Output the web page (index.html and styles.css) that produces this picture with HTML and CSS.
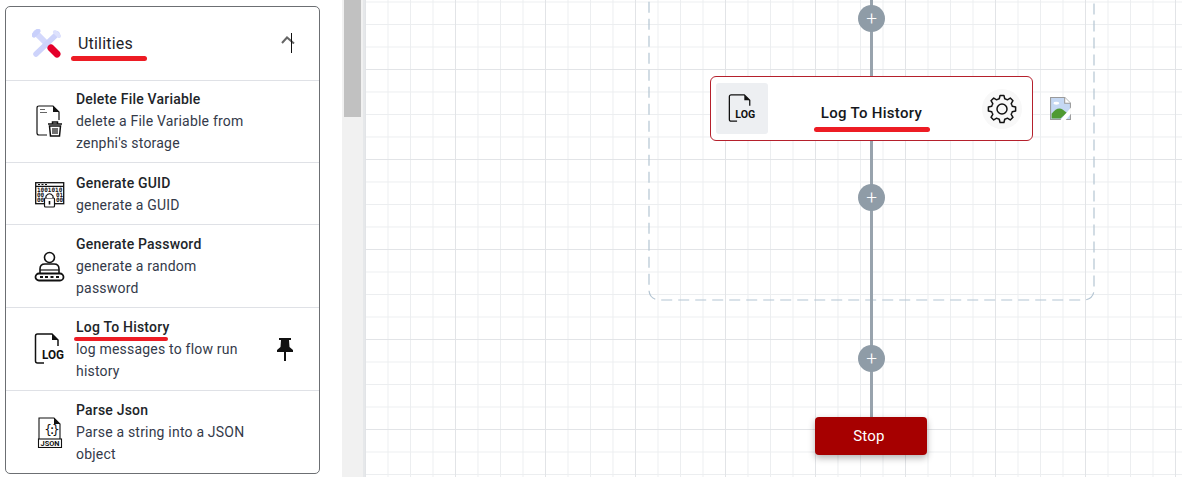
FILE: index.html
```html
<!DOCTYPE html>
<html lang="en">
  <head>
    <meta charset="UTF-8" />
    <title>Flow Designer</title>
    <link rel="stylesheet" href="styles.css">
  </head>
  <body>
    <div class="page">
      <aside class="sidebar">
        <div class="panel">
          <div class="panel-header">
            <svg class="utilities-icon" viewBox="0 0 29 29">
              <path d="M4 4 L19 19" stroke="#d3d8fc" stroke-width="6" stroke-linecap="round"/>
              <path d="M2 6 L6 2" stroke="#c9d0fb" stroke-width="5" stroke-linecap="round"/>
              <path d="M25 5 L4 25" stroke="#cdd3fb" stroke-width="5.500" stroke-linecap="round"/>
              <path d="M23 3 L27 7" stroke="#dde1fd" stroke-width="4" stroke-linecap="round"/>
              <path d="M19 19 L25 25" stroke="#e4002b" stroke-width="7" stroke-linecap="round"/>
            </svg>
            <span class="panel-title">Utilities</span>
            <svg class="chevron" viewBox="0 0 14 8">
              <path d="M1 7 L6 1.500 L13 7.500" fill="none" stroke="#666" stroke-width="2"/>
            </svg>
            <span class="text-cursor"></span>
            <span class="mark mark-utilities"></span>
          </div>

          <div class="row row-first">
            <svg class="row-icon" viewBox="0 0 32 32">
              <path d="M13 30 H5 Q3 30 3 28 V3 Q3 1 5 1 H19 L25 7 V15" fill="none" stroke="#111" stroke-width="1.200"/>
              <path d="M19 1 V7 H25 Z" fill="#111"/>
              <path d="M6 4.500 H11 M6 7.500 H13" stroke="#666" stroke-width="1"/>
              <path d="M14 19 H28 M18.500 19 V17 H23.500 V19" fill="none" stroke="#111" stroke-width="1.500"/>
              <path d="M15.500 21 H26.500 L25.500 31 H16.500 Z" fill="none" stroke="#111" stroke-width="1.500"/>
              <path d="M19 23 V29 M21 23 V29 M23 23 V29" stroke="#111" stroke-width="1.200"/>
            </svg>
            <div class="row-text">
              <div class="row-title">Delete File Variable</div>
              <div class="row-desc">delete a File Variable from zenphi's storage</div>
            </div>
          </div>

          <div class="row row-short">
            <svg class="row-icon" viewBox="0 0 32 32">
              <rect x="1.700" y="4.700" width="28" height="21" fill="none" stroke="#111" stroke-width="1.300"/>
              <path d="M2 8.300 H30" stroke="#111" stroke-width="1.200"/>
              <path d="M4 6.500 H6 M7.500 6.500 H9.500 M11 6.500 H13" stroke="#111" stroke-width="1"/>
              <text class="tiny-code" x="3" y="14">1001010</text>
              <text class="tiny-code" x="3" y="19">00</text>
              <text class="tiny-code" x="22" y="19">01</text>
              <text class="tiny-code" x="3" y="24">00</text>
              <text class="tiny-code" x="22" y="24">00</text>
              <rect x="10.500" y="20" width="10" height="9" rx="1" fill="#fff" stroke="#111" stroke-width="1.200"/>
              <path d="M12 20 V18 Q15.500 13.500 19 18 V20" fill="#fff" stroke="#111" stroke-width="1.200"/>
              <path d="M15.500 23 V26.500" stroke="#111" stroke-width="1.600"/>
            </svg>
            <div class="row-text">
              <div class="row-title">Generate GUID</div>
              <div class="row-desc">generate a GUID</div>
            </div>
          </div>

          <div class="row row-tall">
            <svg class="row-icon" viewBox="0 0 32 32">
              <circle cx="15.500" cy="7.500" r="5" fill="none" stroke="#111" stroke-width="1.600"/>
              <path d="M6 23 V19 Q6 14 11 14 H20 Q25 14 25 19 V23" fill="none" stroke="#111" stroke-width="1.600"/>
              <path d="M6 20 H25" stroke="#111" stroke-width="1.200"/>
              <rect x="1.500" y="23.500" width="28" height="7" rx="3.500" fill="none" stroke="#111" stroke-width="1.800"/>
              <path d="M6 27 H9 M11 27 H14 M16.500 27 H19.500 M22 27 H25" stroke="#111" stroke-width="1.800"/>
            </svg>
            <div class="row-text">
              <div class="row-title">Generate Password</div>
              <div class="row-desc">generate a random password</div>
            </div>
          </div>

          <div class="row row-tall">
            <svg class="row-icon" viewBox="0 0 32 32">
              <path d="M10 30 H3.500 Q1.500 30 1.500 28 V3 Q1.500 1 3.500 1 H18 L24 7 V13" fill="none" stroke="#111" stroke-width="1.500"/>
              <path d="M18 1 V7 H24 Z" fill="#111"/>
              <text class="log-text" x="8" y="26" textLength="22" lengthAdjust="spacingAndGlyphs">LOG</text>
            </svg>
            <div class="row-text">
              <div class="row-title">Log To History</div>
              <div class="row-desc">log messages to flow run history</div>
            </div>
            <svg class="pin" viewBox="0 0 18 24">
              <path d="M3 1 H15 V3 H13 L13.500 10 L17 13 V15 H1 V13 L4.500 10 L5 3 H3 Z" fill="#111"/>
              <path d="M9 15 V24" stroke="#111" stroke-width="2"/>
            </svg>
            <span class="mark mark-row"></span>
          </div>

          <div class="row row-tall row-last">
            <svg class="row-icon" viewBox="0 -1 32 32">
              <path d="M5 22 V1 H20 L26 7 V22" fill="none" stroke="#111" stroke-width="1.100"/>
              <path d="M20 1 V7 H26 Z" fill="#111"/>
              <text class="brace-text" x="10.500" y="17" textLength="15">{:}</text>
              <rect x="4.500" y="22" width="23" height="8.500" fill="none" stroke="#111" stroke-width="1.100"/>
              <text class="json-text" x="6.500" y="29" textLength="19" lengthAdjust="spacingAndGlyphs">JSON</text>
            </svg>
            <div class="row-text">
              <div class="row-title">Parse Json</div>
              <div class="row-desc">Parse a string into a JSON object</div>
            </div>
          </div>
        </div>
      </aside>

      <div class="scrollbar"><div class="scrollbar-thumb"></div></div>

      <main class="canvas">
        <svg class="group-box" width="448" height="362">
          <rect x="1" y="1" width="445" height="359" rx="10" fill="none" stroke="#b4c5d3" stroke-width="1.200" stroke-dasharray="11 6"/>
        </svg>
        <div class="connector"></div>

        <button class="add-btn add-1">+</button>

        <div class="node">
          <div class="node-icon">
            <svg class="node-log" viewBox="0 0 32 32">
              <path d="M10 30 H3.500 Q1.500 30 1.500 28 V3 Q1.500 1 3.500 1 H18 L24 7 V13" fill="none" stroke="#111" stroke-width="1.400"/>
              <path d="M18 1 V7 H24 Z" fill="#111"/>
              <text class="log-text" x="8" y="26" textLength="22" lengthAdjust="spacingAndGlyphs">LOG</text>
            </svg>
          </div>
          <div class="node-title">Log To History</div>
          <div class="node-gear">
            <svg viewBox="0 0 24 24" width="30" height="30">
              <defs>
                <path id="tooth" d="M8.750 4.150 L9.800 3.790 L10.470 1.110 H13.530 L14.200 3.790 L15.250 4.150" fill="none" stroke="#111" stroke-width="1.200" stroke-linejoin="round"/>
              </defs>
              <use href="#tooth"/>
              <use href="#tooth" transform="rotate(45 12 12)"/>
              <use href="#tooth" transform="rotate(90 12 12)"/>
              <use href="#tooth" transform="rotate(135 12 12)"/>
              <use href="#tooth" transform="rotate(180 12 12)"/>
              <use href="#tooth" transform="rotate(225 12 12)"/>
              <use href="#tooth" transform="rotate(270 12 12)"/>
              <use href="#tooth" transform="rotate(315 12 12)"/>
              <circle cx="12" cy="12" r="4" fill="none" stroke="#111" stroke-width="1.200"/>
            </svg>
          </div>
          <span class="mark mark-node"></span>
        </div>

        <svg class="broken-img" viewBox="0 0 20 22">
          <path d="M0.500 0.500 H14 L19.500 6 V21.500 H0.500 Z" fill="#c5d8f3" stroke="#9a9a9a"/>
          <path d="M14 0.500 V6 H19.500" fill="#fff" stroke="#9a9a9a"/>
          <path d="M1.500 20.500 V16 Q7 9 12 12 L16 15 L10 20.500 Z" fill="#4f9a32"/>
          <path d="M10 22 L20 10 V16 L15 22 Z" fill="#fff"/>
          <ellipse cx="6" cy="6" rx="2.800" ry="1.400" fill="#fff"/>
        </svg>

        <button class="add-btn add-2">+</button>
        <button class="add-btn add-3">+</button>

        <button class="stop-btn">Stop</button>
      </main>
    </div>
  </body>
</html>
```

FILE: styles.css
```css
:root {
  --line-color: #98a3ad;
  --panel-border: #6c6f73;
  --divider: #dfe1e6;
  --mark-red: #ed1c24;
}

* {
  box-sizing: border-box;
}

html,
body {
  margin: 0;
  height: 100%;
  overflow: hidden;
}

body {
  font-family: Roboto, "Liberation Sans", sans-serif;
  background: #fff;
  color: #212529;
}

.page {
  display: flex;
  height: 477px;
}

/* left panel */
.sidebar {
  width: 342px;
  flex-shrink: 0;
  padding: 6px 22px 3px 5px;
}

.panel {
  height: 468px;
  border: 1px solid var(--panel-border);
  border-radius: 5px;
  overflow: hidden;
}

.panel-header {
  position: relative;
  display: flex;
  align-items: center;
  height: 74px;
  padding-left: 26px;
  border-bottom: 1px solid var(--divider);
}

.utilities-icon {
  width: 29px;
  height: 29px;
  margin-top: -1px;
}

.panel-title {
  margin-left: 17px;
  font-size: 16px;
  letter-spacing: 0.2px;
  color: #1f2329;
}

.chevron {
  position: absolute;
  left: 275px;
  top: 29px;
  width: 14px;
  height: 8px;
}

.text-cursor {
  position: absolute;
  left: 285px;
  top: 26px;
  width: 1px;
  height: 20px;
  background: #111;
}

.row {
  position: relative;
  display: flex;
  align-items: center;
  border-bottom: 1px solid var(--divider);
}

.row-first {
  height: 82px;
  padding-bottom: 1px;
}

.row-tall {
  height: 83px;
}

.row-short {
  height: 62px;
}

.row-last {
  padding-bottom: 2px;
  border-bottom: 0;
}

.row-icon {
  width: 32px;
  height: 32px;
  margin-left: 28px;
  flex-shrink: 0;
}

.row-text {
  width: 178px;
  margin-left: 10px;
  font-size: 14px;
  line-height: 22px;
  letter-spacing: 0.2px;
}

.row-title {
  font-weight: 500;
  color: #212529;
}

.row-desc {
  color: #343a4a;
}

.pin {
  position: absolute;
  left: 270px;
  top: 29px;
  width: 18px;
  height: 24px;
}

.tiny-code {
  font: 700 6px "DejaVu Sans Mono", monospace;
  fill: #111;
}

.log-text {
  font: 700 13px Roboto, sans-serif;
  fill: #111;
}

.brace-text {
  font: 400 12px "DejaVu Sans Mono", monospace;
  fill: #111;
}

.json-text {
  font: 700 7.500px Roboto, sans-serif;
  fill: #111;
}

/* annotation strokes */
.mark {
  position: absolute;
  height: 5px;
  border-radius: 3px;
  background: var(--mark-red);
}

.mark-utilities {
  left: 65px;
  top: 49px;
  width: 76px;
}

.mark-row {
  left: 68px;
  top: 29px;
  width: 94px;
  height: 4px;
}

.mark-node {
  left: 103px;
  top: 50px;
  width: 116px;
}

/* fake browser scrollbar */
.scrollbar {
  width: 21px;
  flex-shrink: 0;
  background: #f1f1f1;
}

.scrollbar-thumb {
  width: 17px;
  height: 117px;
  margin-left: 2px;
  background: #c1c1c1;
}

/* flow canvas */
.canvas {
  position: relative;
  flex: 1;
  overflow: hidden;
  border-left: 2px solid #e6e8ea;
  background-color: #fff;
  background-image:
    linear-gradient(to right, #e2e4e7 1px, transparent 1px),
    linear-gradient(to bottom, #e2e4e7 1px, transparent 1px),
    linear-gradient(to right, #eceef0 1px, transparent 1px),
    linear-gradient(to bottom, #eceef0 1px, transparent 1px);
  background-size: 90px 90px, 90px 90px, 22.500px 22.500px, 22.500px 22.500px;
  background-position: 0 -21px, 0 -21px, 0 -21px, 0 -21px;
}

.group-box {
  position: absolute;
  left: 283px;
  top: -60px;
}

.connector {
  position: absolute;
  left: 505px;
  top: 0;
  width: 3px;
  height: 420px;
  background: var(--line-color);
}

.add-btn {
  position: absolute;
  left: 493px;
  width: 27px;
  height: 27px;
  padding: 0;
  border: 0;
  border-radius: 50%;
  background: #8f9ca7;
  color: #fff;
  font: 300 19px/25px Roboto, sans-serif;
}

.add-1 {
  top: 5px;
}

.add-2 {
  top: 184px;
}

.add-3 {
  top: 345px;
}

.node {
  position: absolute;
  left: 345px;
  top: 76px;
  display: flex;
  align-items: center;
  width: 323px;
  height: 65px;
  padding: 5px;
  background: #fff;
  border: 1px solid #b5202c;
  border-radius: 6px;
}

.node-icon {
  display: flex;
  align-items: center;
  justify-content: center;
  width: 52px;
  height: 51px;
  background: #edeff2;
  border-radius: 3px;
}

.node-log {
  width: 29px;
  height: 29px;
}

.node-title {
  flex: 1;
  padding-right: 7px;
  text-align: center;
  margin-top: 8px;
  font-size: 15px;
  font-weight: 500;
  letter-spacing: 0.3px;
  color: #15181c;
}

.node-gear {
  display: flex;
  align-items: center;
  justify-content: center;
  width: 40px;
  height: 40px;
  margin-right: 5px;
  border-radius: 50%;
  background: #f8f8f8;
}

.broken-img {
  position: absolute;
  left: 685px;
  top: 97px;
  width: 21px;
  height: 23px;
}

.stop-btn {
  position: absolute;
  left: 450px;
  top: 417px;
  width: 112px;
  height: 38px;
  padding: 0 4px 0 0;
  border: 0;
  border-radius: 4px;
  background: #a60000;
  box-shadow: 0 3px 7px rgba(0, 0, 0, 0.3);
  color: #fff;
  font: 400 15px Roboto, sans-serif;
  letter-spacing: 0.2px;
}
```
